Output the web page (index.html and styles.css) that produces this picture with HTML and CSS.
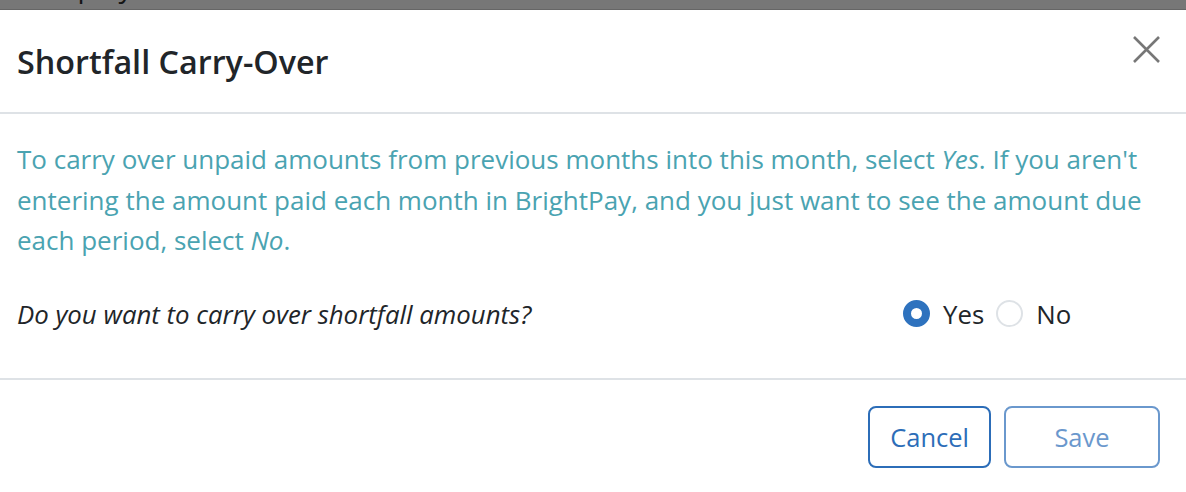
FILE: index.html
```html
<!doctype html>
<html lang="en">
<head>
	<meta charset="UTF-8">
	<title>Shortfall Carry-Over</title>

	<link rel="stylesheet" href="styles.css">

</head>

<body>

	<div id="backdrop">
		<span class="behindText">Employee</span>
	</div>

	<div id="shortfallModal">

		<div class="modalHeader">
			<h2 class="modalTitle">Shortfall Carry-Over</h2>
			<button class="closeButton" type="button" aria-label="Close">
				<svg width="27" height="27" viewBox="0 0 27 27">
					<path d="M1 1 L26 26 M26 1 L1 26" stroke="#777" stroke-width="2.6" fill="none"/>
				</svg>
			</button>
		</div>

		<div class="modalBody">
			<p class="hint">To carry over unpaid amounts from previous months into this month, select <em>Yes</em>. If you aren't entering the amount paid each month in BrightPay, and you just want to see the amount due each period, select <em>No</em>.</p>

			<div class="questionRow">
				<span class="question">Do you want to carry over shortfall amounts?</span>
				<div class="choices">
					<label class="choice"><span class="radio checked"></span>Yes</label>
					<label class="choice"><span class="radio"></span>No</label>
				</div>
			</div>
		</div>

		<div class="modalFooter">
			<button class="btn" type="button">Cancel</button>
			<button class="btn saveBtn" type="button" disabled>Save</button>
		</div>

	</div>

</body>
</html>
```

FILE: styles.css
```css
html, body {
	margin: 0px;
	padding: 0px;
	height: 100%;
	overflow: hidden;
}
body {
	background-color: #ffffff;
	font-family: "Open Sans", "Liberation Sans", sans-serif;
	color: #212529;
}

/* the page behind the dialog, only a strip of it shows */
#backdrop {
	height: 10px;
	background-color: #777777;
	border-bottom: 1px solid #666666;
	box-sizing: border-box;
	overflow: hidden;
	position: relative;
}
.behindText {
	position: absolute;
	left: 36px;
	top: -33px;
	font-size: 28px;
	color: #151515;
}

#shortfallModal {
	margin-left: -20px;
	width: 1206px;
	height: 482px;
	background-color: #ffffff;
	border-radius: 9px;
}

.modalHeader {
	display: flex;
	align-items: center;
	justify-content: space-between;
	height: 102px;
	padding: 0 26px 0 37px;
	border-bottom: 2px solid #dee2e6;
}
.modalTitle {
	margin: 0;
	font-size: 32.3px;
	font-weight: 600;
	color: #212529;
}
.closeButton {
	align-self: flex-start;
	margin-top: 26px;
	border: none;
	background: none;
	padding: 0;
	width: 27px;
	height: 27px;
}

.modalBody {
	padding: 25px 26px 0 37px;
	height: 266px;
	box-sizing: border-box;
	border-bottom: 2px solid #dee2e6;
}
.hint {
	margin: 0;
	font-size: 26px;
	line-height: 40.5px;
	color: #4aa3b1;
}
.questionRow {
	display: grid;
	grid-template-columns: 1fr 257px;
	align-items: center;
	margin-top: 33px;
	font-size: 25.8px;
	line-height: 40px;
}
.question {
	font-style: italic;
}
.choices {
	display: flex;
	align-items: center;
}
.choice {
	display: flex;
	align-items: center;
	margin-right: 12px;
}
.radio {
	width: 27px;
	height: 27px;
	border-radius: 50%;
	border: 2px solid #dee2e6;
	box-sizing: border-box;
	margin-right: 13px;
}
.radio.checked {
	border: 8px solid #2e72be;
	background-color: #ffffff;
}

.modalFooter {
	display: flex;
	justify-content: flex-end;
	gap: 13px;
	padding: 26px 26px 0 0;
}
.btn {
	font-family: "Open Sans", "Liberation Sans", sans-serif;
	font-size: 25.5px;
	height: 62px;
	padding: 0 20px;
	background-color: #ffffff;
	border: 2px solid #2c6db8;
	border-radius: 8px;
	color: #2c6db8;
}
.saveBtn {
	min-width: 156px;
	opacity: 0.7;
}
```
